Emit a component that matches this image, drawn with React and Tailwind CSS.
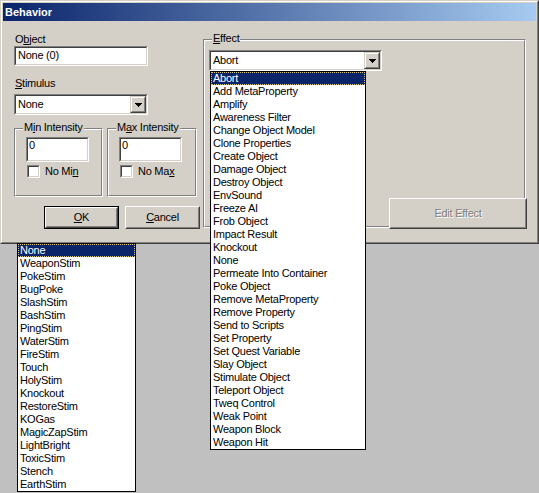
import React from "react";

const effects = [
  "Abort", "Add MetaProperty", "Amplify", "Awareness Filter", "Change Object Model",
  "Clone Properties", "Create Object", "Damage Object", "Destroy Object", "EnvSound",
  "Freeze AI", "Frob Object", "Impact Result", "Knockout", "None",
  "Permeate Into Container", "Poke Object", "Remove MetaProperty", "Remove Property",
  "Send to Scripts", "Set Property", "Set Quest Variable", "Slay Object",
  "Stimulate Object", "Teleport Object", "Tweq Control", "Weak Point",
  "Weapon Block", "Weapon Hit",
];

const stims = [
  "None", "WeaponStim", "PokeStim", "BugPoke", "SlashStim", "BashStim", "PingStim",
  "WaterStim", "FireStim", "Touch", "HolyStim", "Knockout", "RestoreStim", "KOGas",
  "MagicZapStim", "LightBright", "ToxicStim", "Stench", "EarthStim",
];

function Sunken({ className = "", innerClass = "", children }) {
  return (
    <div className={`border border-t-[#808080] border-l-[#808080] border-b-white border-r-white ${className}`}>
      <div className={`h-full border border-t-[#404040] border-l-[#404040] border-b-[#d4d0c8] border-r-[#d4d0c8] bg-white ${innerClass}`}>
        {children}
      </div>
    </div>
  );
}

function Raised({ className = "", innerClass = "", children }) {
  return (
    <div className={`border border-t-white border-l-white border-b-[#404040] border-r-[#404040] bg-[#d4d0c8] ${className}`}>
      <div className={`h-full border border-t-[#d4d0c8] border-l-[#d4d0c8] border-b-[#808080] border-r-[#808080] flex items-center justify-center ${innerClass}`}>
        {children}
      </div>
    </div>
  );
}

function Arrow() {
  return (
    <svg width="7" height="4" viewBox="0 0 7 4" shapeRendering="crispEdges">
      <rect x="0" y="0" width="7" height="1" fill="#000" />
      <rect x="1" y="1" width="5" height="1" fill="#000" />
      <rect x="2" y="2" width="3" height="1" fill="#000" />
      <rect x="3" y="3" width="1" height="1" fill="#000" />
    </svg>
  );
}

function ArrowBtn() {
  return (
    <div className="w-[16px] h-full border border-t-[#d4d0c8] border-l-[#d4d0c8] border-b-[#404040] border-r-[#404040] bg-[#d4d0c8]">
      <div className="h-full border border-t-white border-l-white border-b-[#808080] border-r-[#808080] flex items-center justify-center">
        <Arrow />
      </div>
    </div>
  );
}

function Combo({ value, className = "" }) {
  return (
    <Sunken className={className} innerClass="flex">
      <div className="flex-1 pl-[2px] pt-[2px] leading-[13px]">{value}</div>
      <ArrowBtn />
    </Sunken>
  );
}

function Group({ label, className = "", children }) {
  return (
    <div className={`relative border border-t-[#808080] border-l-[#808080] border-b-white border-r-white ${className}`}>
      <div className="h-full border border-t-white border-l-white border-b-[#808080] border-r-[#808080]">
        {children}
      </div>
      <span className="absolute left-[8px] top-[-8px] bg-[#d4d0c8] px-[1px] leading-[13px]">{label}</span>
    </div>
  );
}

function Check({ label }) {
  return (
    <div className="flex items-center h-[13px] ml-[1px] mt-[3px]">
      <Sunken className="w-[13px] h-[13px]" />
      <span className="ml-[5px] leading-[13px]">{label}</span>
    </div>
  );
}

function Intensity({ title, check, className = "" }) {
  return (
    <Group label={title} className={className}>
      <div className="pl-[10px] pt-[7px]">
        <Sunken className="w-[63px] h-[25px]" innerClass="pl-[1px] leading-[13px]">0</Sunken>
        <Check label={check} />
      </div>
    </Group>
  );
}

function ListBox({ items, className = "" }) {
  return (
    <div className={`absolute bg-white border border-black ${className}`}>
      {items.map((t, i) =>
        i === 0 ? (
          <div key={t} className="h-[13px] leading-[11px] pl-[1px] bg-[#0a246a] text-white border border-dotted border-[#d8c878] whitespace-nowrap">
            {t}
          </div>
        ) : (
          <div key={t} className="h-[13px] leading-[13px] pl-[2px] whitespace-nowrap">
            {t}
          </div>
        )
      )}
    </div>
  );
}

export default function App() {
  return (
    <div className="relative w-[539px] h-[493px] bg-[#c0c0c0] text-black text-[11px] tracking-[-0.25px] font-['Liberation_Sans',Arial,sans-serif] overflow-hidden">
      {/* Window */}
      <div className="w-[539px] h-[244px] border border-t-[#d4d0c8] border-l-[#d4d0c8] border-b-[#404040] border-r-[#404040]">
        <div className="h-full border border-t-white border-l-white border-b-[#808080] border-r-[#808080] bg-[#d4d0c8] p-[1px] flex flex-col">
          <div className="h-[18px] flex items-center pl-[2px] bg-[linear-gradient(to_right,#0a246a,#a6caf0)] text-white font-bold tracking-normal leading-[13px]">
            Behavior
          </div>
          <div className="flex flex-1 pl-[11px]">
            {/* Left column */}
            <div className="w-[186px] flex flex-col pt-[12px]">
              <div className="leading-[13px] pl-[1px]">
                O<span className="underline">b</span>ject
              </div>
              <Sunken className="w-[134px] h-[20px]" innerClass="pl-[2px] pt-[1px] leading-[13px]">
                None (0)
              </Sunken>
              <div className="leading-[13px] mt-[11px] pl-[1px]">
                <span className="underline">S</span>timulus
              </div>
              <Combo value="None" className="w-[134px] h-[21px] mt-[4px]" />
              <div className="flex gap-[4px] mt-[13px]">
                <Intensity
                  title={<>M<span className="underline">i</span>n Intensity</>}
                  check={<>No Mi<span className="underline">n</span></>}
                  className="w-[89px] h-[69px]"
                />
                <Intensity
                  title={<>M<span className="underline">a</span>x Intensity</>}
                  check={<>No Ma<span className="underline">x</span></>}
                  className="w-[90px] h-[69px]"
                />
              </div>
              <div className="flex gap-[6px] mt-[9px] ml-[30px]">
                <div className="w-[75px] h-[23px] border border-black">
                  <Raised className="h-full">
                    <span><span className="underline">O</span>K</span>
                  </Raised>
                </div>
                <Raised className="w-[75px] h-[23px]">
                  <span><span className="underline">C</span>ancel</span>
                </Raised>
              </div>
            </div>
            {/* Right column */}
            <div className="ml-[3px] pt-[18px]">
              <Group label={<><span className="underline">E</span>ffect</>} className="w-[323px] h-[189px]">
                <div className="pl-[4px] pt-[9px]">
                  <Combo value="Abort" className="w-[173px] h-[21px]" />
                </div>
                <Raised className="absolute left-[185px] top-[158px] w-[138px] h-[31px]">
                  <span className="text-[#808080] [text-shadow:1px_1px_0_#ffffff]">Edit Effect</span>
                </Raised>
              </Group>
            </div>
          </div>
        </div>
      </div>

      <ListBox items={effects} className="left-[210px] top-[71px] w-[156px]" />
      <ListBox items={stims} className="left-[17px] top-[243px] w-[119px]" />
    </div>
  );
}
